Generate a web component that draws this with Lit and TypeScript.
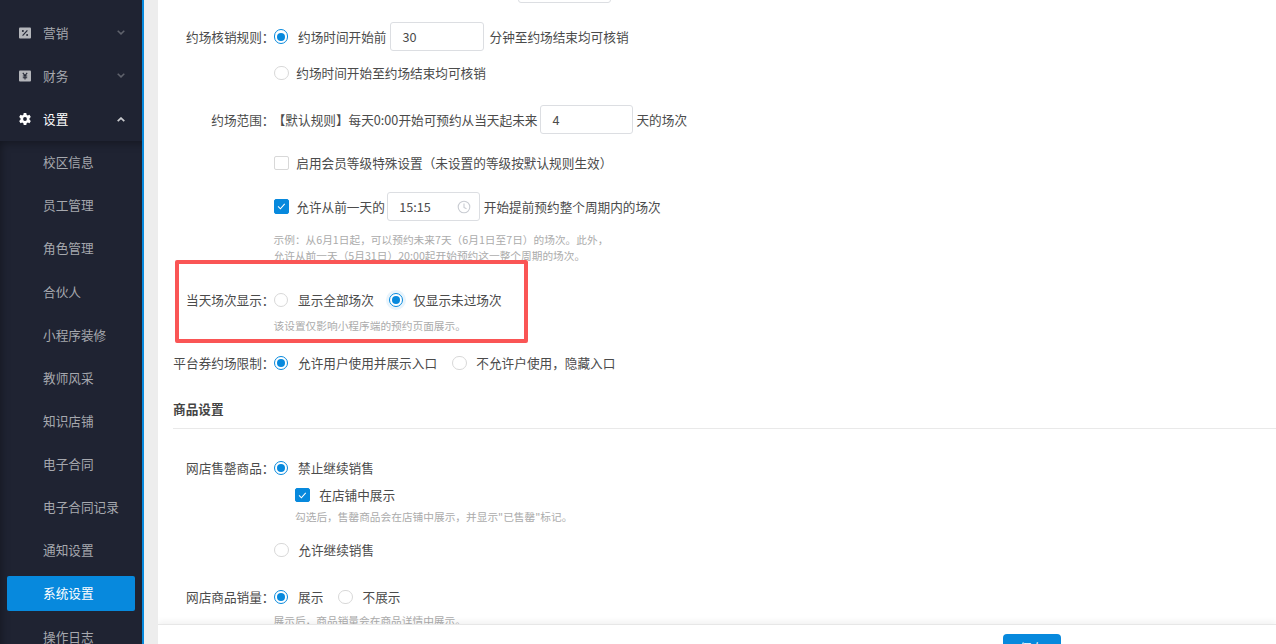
import { LitElement, html, css, svg } from "lit";
import { customElement } from "lit/decorators.js";

const chevDown = html`<svg class="chev" viewBox="0 0 8 5"><path d="M.7.8 4 3.900 7.300.8" fill="none" stroke="currentColor" stroke-width="1.500"/></svg>`;
const chevUp = html`<svg class="chev up" viewBox="0 0 8 5"><path d="M.7 4.200 4 1.100l3.300 3.100" fill="none" stroke="currentColor" stroke-width="1.700"/></svg>`;
const tag = svg`<rect x="0" y="0.5" width="12" height="11" rx="1" fill="#b4b6bb"/>`;
const iconPct = html`<svg class="ico" viewBox="0 0 12 12">${tag}<path d="M3.600 8.600 8.400 3.400" stroke="#262a38" stroke-width="1.200"/><circle cx="3.900" cy="4" r="1" fill="#262a38"/><circle cx="8.100" cy="8" r="1" fill="#262a38"/></svg>`;
const iconYen = html`<svg class="ico" viewBox="0 0 12 12">${tag}<path d="M3.800 2.800 6 5.600l2.200-2.800M6 5.600v4M3.800 6h4.400M3.800 7.800h4.400" fill="none" stroke="#262a38" stroke-width="1.100"/></svg>`;
const iconGear = html`<svg class="ico" viewBox="0 0 12 12"><path fill-rule="evenodd" fill="#fff" d="M4.700 0h2.600l.3 1.700 1.200.7L10.500 1.800l1.300 2.300-1.300 1.100v1.600l1.300 1.100-1.300 2.300-1.700-.6-1.200.7L7.300 12H4.700l-.3-1.700-1.200-.7-1.700.6L.2 7.900l1.300-1.100V5.200L.2 4.100 1.500 1.800l1.700.6 1.200-.7zM6 4.100a1.900 1.900 0 1 0 0 3.800 1.900 1.900 0 0 0 0-3.800z"/></svg>`;
const clock = html`<svg class="clock" viewBox="0 0 14 14"><circle cx="7" cy="7" r="5.800" fill="none" stroke="#c9ccd2" stroke-width="1.100"/><path d="M7 3.600V7.400l2.500 1.300" fill="none" stroke="#c9ccd2" stroke-width="1.100"/></svg>`;
const check = html`<svg viewBox="0 0 14 14" class="tick"><path d="M3.400 7.200 6 9.800l4.800-5.400" fill="none" stroke="#fff" stroke-width="1.200"/></svg>`;

@customElement("app-root")
export class AppRoot extends LitElement {
  static styles = css`
    :host { display: block; width: 1276px; height: 644px; overflow: hidden; position: relative; background: #fff;
      font-family: "Noto Sans CJK SC", "Liberation Sans", sans-serif; font-size: 12.650px; color: #4b4b4b; }
    .app { display: flex; height: 644px; }
    .side { flex: 0 0 142px; background: #1f2332; overflow: hidden; color: #a6a8ae; }
    .strip { flex: 0 0 2px; background: #0789dd; }
    .band { flex: 0 0 14px; background: #ededed; }
    .main { flex: 1; min-width: 0; display: flex; flex-direction: column; height: 644px; overflow: hidden; }
    .scroll { flex: 0 0 624px; overflow: hidden; padding-left: 15px; }
    .foot { flex: 0 0 60px; background: #fff; border-top: 1px solid #e7e7e7; box-shadow: 0 -3px 6px rgba(0,0,0,.05);
      padding: 9px 215px 0 0; display: flex; justify-content: flex-end; position: relative; }
    .save { width: 58px; height: 32px; box-sizing: border-box; padding-bottom: 6px; border-radius: 4px; background: #0789dd; color: #fff; display: flex; align-items: center; justify-content: center; }

    .menu { height: 43px; margin-top: 11.200px; }
    .item { height: 43.140px; display: flex; align-items: center; padding-left: 19px; box-sizing: border-box; position: relative; }
    .item .txt { margin-left: 12px; flex: 1; line-height: 20px; }
    .item.on { color: #fff; }
    .ico { width: 12px; height: 12px; flex: none; }
    .chev { width: 8px; height: 5px; margin-right: 17px; color: #5f626c; }
    .chev.up { color: #c9cace; }
    .sub { box-shadow: inset 5px 6px 8px -4px rgba(0,0,0,.35); }
    .sub .it { height: 43.140px; display: flex; align-items: center; padding-left: 43px; box-sizing: border-box; line-height: 20px; }
    .sub .it.act { color: #fff; position: relative; }
    .sub .it.act::before { content: ""; position: absolute; left: 7px; right: 7px; top: 4px; bottom: 4px; background: #0789dd; border-radius: 2px; }
    .sub .it.act span { position: relative; }

    .row { display: flex; align-items: center; min-height: 22px; line-height: 22px; white-space: nowrap; }
    .lab { flex: 0 0 101.500px; box-sizing: border-box; text-align: right; margin-right: -1.800px; }
    .nolab { padding-left: 100px; }
    .inp { box-sizing: border-box; height: 29px; border: 1px solid #dcdee2; border-radius: 3px; background: #fff; display: flex; align-items: center; padding-left: 11px; justify-content: space-between; color: #4b4b4b; flex: none; }
    .w94 { width: 94px; }
    .w93 { width: 93px; }
    .r { flex: none; width: 14.600px; height: 14.600px; box-sizing: border-box; border-radius: 50%; border: 1px solid #d8d8d8; background: #fff; margin-left: 1px; position: relative; }
    .r.on { border-color: #0789dd; }
    .r.on::after { content: ""; position: absolute; left: 2.300px; top: 2.300px; width: 8px; height: 8px; border-radius: 50%; background: #0789dd; }
    .r.halo { box-shadow: 0 0 0 3px #e8f4fc; }
    .t10 { margin-left: 9.700px; }
    .t8 { margin-left: 7.700px; }
    .t2 { margin-left: 3px; margin-right: 3px; }
    .t3 { margin-left: 4px; margin-right: 5px; }
    .t25 { margin-left: 2.500px; margin-right: 3.500px; }
    .opt { margin-left: 15px; }
    .c { flex: none; width: 14.600px; height: 14.600px; box-sizing: border-box; border: 1px solid #d8d8d8; border-radius: 2px; margin-left: 1px; background: #fff; }
    .c.on { background: #0789dd; border-color: #0789dd; }
    .tick { display: block; width: 12.600px; height: 12.600px; }
    .clock { width: 14px; height: 14px; margin-right: 8px; }
    .hint { font-size: 10.700px; line-height: 16px; color: #ababab; padding-left: 100.500px; white-space: nowrap; }
    .hint.sub2 { padding-left: 122px; }
    .head { font-weight: 700; line-height: 20px; color: #444; }
    .line { height: 1px; background: #e9e9e9; margin-top: 9px; }
    .sub-row { padding-left: 122px; }
    .sub-row .c { margin-left: 0; }

    .top0 { margin-top: -26px; padding-left: 345px; }
    .m19 { margin-top: 19px; }
    .m11 { margin-top: 11px; }
    .m21 { margin-top: 21px; }
    .m18 { margin-top: 18px; }
    .m7 { margin-top: 7px; }
    .m25 { margin-top: 25px; }
    .m28 { margin-top: 28px; }
    .m5 { margin-top: 5px; }
    .m3 { margin-top: 3px; }
    .m14 { margin-top: 14px; }

    .mark { position: absolute; left: 175px; top: 260px; width: 353px; height: 83px; box-sizing: border-box; border: 4px solid #fa5555; border-radius: 2px; }
  `;

  render() {
    const subs = ["校区信息", "员工管理", "角色管理", "合伙人", "小程序装修", "教师风采", "知识店铺", "电子合同", "电子合同记录", "通知设置", "系统设置", "操作日志"];
    return html`
      <div class="app">
        <nav class="side">
          <div class="menu">
            <div class="item">${iconPct}<span class="txt">营销</span>${chevDown}</div>
            <div class="item">${iconYen}<span class="txt">财务</span>${chevDown}</div>
            <div class="item on">${iconGear}<span class="txt">设置</span>${chevUp}</div>
            <div class="sub">
              ${subs.map((s) => html`<div class="it ${s === "系统设置" ? "act" : ""}"><span>${s}</span></div>`)}
            </div>
          </div>
        </nav>
        <div class="strip"></div>
        <div class="band"></div>
        <div class="main">
          <div class="scroll">
            <div class="row top0"><div class="inp w93"></div></div>

            <div class="row m19"><span class="lab">约场核销规则：</span><i class="r on"></i><span class="t10">约场时间开始前</span><div class="inp w94 t3">30</div><span>分钟至约场结束均可核销</span></div>
            <div class="row m11 nolab"><i class="r"></i><span class="t8">约场时间开始至约场结束均可核销</span></div>
            <div class="row m21"><span class="lab">约场范围：</span><span>【默认规则】每天0:00开始可预约从当天起未来</span><div class="inp w93 t2">4</div><span>天的场次</span></div>
            <div class="row m18 nolab"><i class="c"></i><span class="t8">启用会员等级特殊设置（未设置的等级按默认规则生效）</span></div>
            <div class="row m18 nolab"><i class="c on">${check}</i><span class="t8">允许从前一天的</span><div class="inp w93 t25">15:15${clock}</div><span>开始提前预约整个周期内的场次</span></div>
            <div class="hint m11">示例：从6月1日起，可以预约未来7天（6月1日至7日）的场次。此外，<br />允许从前一天（5月31日）20:00起开始预约这一整个周期的场次。</div>
            <div class="row m25"><span class="lab">当天场次显示：</span><i class="r"></i><span class="t10">显示全部场次</span><i class="r on halo opt"></i><span class="t10">仅显示未过场次</span></div>
            <div class="hint m7">该设置仅影响小程序端的预约页面展示。</div>
            <div class="row m18"><span class="lab">平台券约场限制：</span><i class="r on"></i><span class="t10">允许用户使用并展示入口</span><i class="r opt"></i><span class="t10">不允许户使用，隐藏入口</span></div>
            <div class="head m25">商品设置</div>
            <div class="line"></div>
            <div class="row m28"><span class="lab">网店售罄商品：</span><i class="r on"></i><span class="t10">禁止继续销售</span></div>
            <div class="row m5 sub-row"><i class="c on">${check}</i><span class="t10">在店铺中展示</span></div>
            <div class="hint sub2 m3">勾选后，售罄商品会在店铺中展示，并显示"已售罄"标记。</div>
            <div class="row m14 nolab"><i class="r"></i><span class="t10">允许继续销售</span></div>
            <div class="row m25"><span class="lab">网店商品销量：</span><i class="r on"></i><span class="t10">展示</span><i class="r opt"></i><span class="t10">不展示</span></div>
            <div class="hint m5">展示后，商品销量会在商品详情中展示。</div>
          </div>
          <div class="foot"><div class="save">保存</div></div>
        </div>
      </div>
      <div class="mark"></div>
    `;
  }
}
